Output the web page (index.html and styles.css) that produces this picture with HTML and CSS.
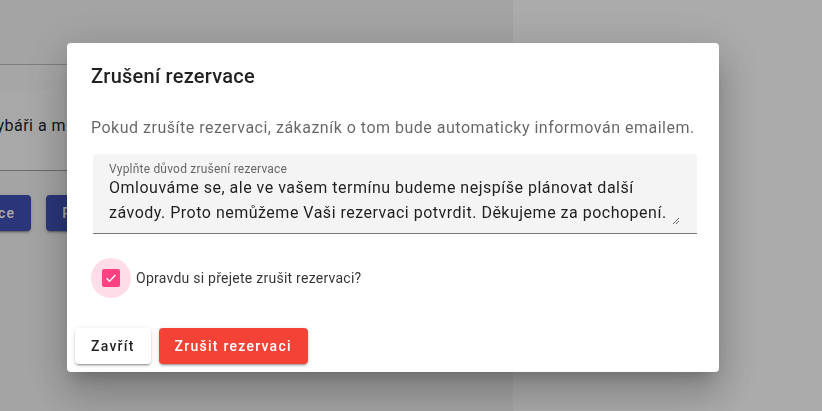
FILE: index.html
```html
<!DOCTYPE html>
<html lang="cs">
<head>
<meta charset="utf-8">
<title>Zrušení rezervace</title>
<link rel="stylesheet" href="styles.css">
</head>
<body>
<div class="page">
  <div class="left-panel">
    <div class="field field-top"></div>
    <div class="gap-band"></div>
    <div class="field field-fill">
      <div class="bg-label">Poznámka</div>
      <div class="bg-value">Zástupci rybáři a místní</div>
    </div>
    <div class="bg-actions">
      <button class="bg-btn bg-btn-first">Rezervace</button>
      <button class="bg-btn">Potvrdit</button>
    </div>
  </div>
  <div class="right-panel"></div>
</div>

<div class="backdrop">
  <div class="dialog">
    <h2 class="dialog-title">Zrušení rezervace</h2>
    <div class="dialog-content">
      <p class="info">Pokud zrušíte rezervaci, zákazník o tom bude automaticky informován emailem.</p>
      <div class="textfield">
        <label class="tf-label">Vyplňte důvod zrušení rezervace</label>
        <div class="tf-value">Omlouváme se, ale ve vašem termínu budeme nejspíše plánovat další závody. Proto nemůžeme Vaši rezervaci potvrdit. Děkujeme za pochopení.</div>
        <svg class="resize" width="8" height="8" viewBox="0 0 8 8"><path d="M7 1 L1 7 M7 4 L4 7" stroke="#555" stroke-width="0.9" fill="none"/></svg>
      </div>
      <div class="check-row">
        <span class="check-ripple">
          <span class="check-box">
            <svg width="14" height="14" viewBox="0 0 24 24"><path d="M4.5 12.5 L9.5 17.5 L19.5 7" stroke="#fff" stroke-width="2.6" fill="none"/></svg>
          </span>
        </span>
        <span class="check-label">Opravdu si přejete zrušit rezervaci?</span>
      </div>
    </div>
    <div class="dialog-actions">
      <button class="btn btn-white">Zavřít</button>
      <button class="btn btn-red">Zrušit rezervaci</button>
    </div>
  </div>
</div>
</body>
</html>
```

FILE: styles.css
```css
* { box-sizing: border-box; }
html, body { margin: 0; padding: 0; }
body {
  width: 822px;
  height: 411px;
  overflow: hidden;
  font-family: Roboto, "Noto Sans", sans-serif;
  background: #fff;
}
.page {
  display: flex;
  height: 411px;
}
.left-panel {
  width: 513px;
  background: #f5f5f5;
  display: flex;
  flex-direction: column;
  overflow: hidden;
}
.right-panel {
  flex: 1;
  background: #fff;
}
.field-top {
  height: 65px;
  border-bottom: 1px solid #bdbdbd;
}
.gap-band {
  height: 25px;
  background: #f8f8f8;
}
.field-fill {
  height: 81px;
  background: #fbfbfb;
  border-bottom: 1px solid #a0a0a0;
  padding: 6px 0 0 0;
  white-space: nowrap;
}
.bg-label {
  font-size: 12px;
  color: #a23fa0;
  margin-left: -60px;
  line-height: 16px;
}
.bg-value {
  font-size: 16px;
  color: #222;
  margin-left: -80px;
  margin-top: 4px;
  letter-spacing: 0.5px;
}
.bg-actions {
  display: flex;
  gap: 15px;
  margin-top: 24px;
  margin-left: -77px;
}
.bg-btn {
  height: 36px;
  padding: 0 16px;
  border: 0;
  border-radius: 4px;
  background: #3f51b5;
  color: #fff;
  font-family: Roboto, sans-serif;
  font-weight: 500;
  font-size: 14px;
  letter-spacing: 1.25px;
  white-space: nowrap;
  box-shadow: 0 3px 1px -2px rgba(0,0,0,.2), 0 2px 2px 0 rgba(0,0,0,.14), 0 1px 5px 0 rgba(0,0,0,.12);
}

.backdrop {
  position: fixed;
  inset: 0;
  background: rgba(0,0,0,0.33);
  display: flex;
  align-items: flex-start;
  padding: 43px 0 0 67px;
}
.dialog {
  width: 652px;
  height: 329px;
  background: #fff;
  border-radius: 4px;
  box-shadow: 0 11px 15px -7px rgba(0,0,0,.2), 0 24px 38px 3px rgba(0,0,0,.14), 0 9px 46px 8px rgba(0,0,0,.12);
  display: flex;
  flex-direction: column;
}
.dialog-title {
  margin: 0;
  padding: 21px 24px 0 24px;
  font-size: 20px;
  font-weight: 500;
  line-height: 24px;
  letter-spacing: 0.25px;
  color: rgba(0,0,0,.87);
}
.dialog-content {
  padding: 0 22px 0 24px;
}
.info {
  margin: 28px 0 0 0;
  font-size: 16px;
  line-height: 24px;
  letter-spacing: 0.5px;
  color: rgba(0,0,0,.6);
}
.textfield {
  margin: 14px 0 0 2px;
  height: 80px;
  background: #f4f4f4;
  border-radius: 4px 4px 0 0;
  border-bottom: 1px solid rgba(0,0,0,.5);
  padding: 7px 16px 0 16px;
  position: relative;
}
.tf-label {
  display: block;
  font-size: 12px;
  line-height: 16px;
  color: rgba(0,0,0,.6);
  letter-spacing: 0.2px;
}
.tf-value {
  font-size: 16px;
  line-height: 25px;
  letter-spacing: 0.5px;
  color: rgba(0,0,0,.87);
  margin-top: -2px;
  padding-right: 10px;
}
.resize {
  position: absolute;
  right: 17px;
  bottom: 8px;
}
.check-row {
  display: flex;
  align-items: center;
  margin-top: 24px;
  margin-left: 0;
}
.check-ripple {
  width: 40px;
  height: 40px;
  border-radius: 50%;
  background: #ffdde8;
  display: flex;
  align-items: center;
  justify-content: center;
}
.check-box {
  width: 18px;
  height: 18px;
  border-radius: 2px;
  background: #ff4081;
  display: flex;
  align-items: center;
  justify-content: center;
}
.check-label {
  margin-left: 5px;
  font-size: 14px;
  color: rgba(0,0,0,.8);
  letter-spacing: 0.25px;
}
.dialog-actions {
  margin-top: auto;
  padding: 0 8px 8px 8px;
  display: flex;
  gap: 8px;
}
.btn {
  height: 36px;
  padding: 0 16px;
  border: 0;
  border-radius: 4px;
  font-family: Roboto, sans-serif;
  font-size: 14px;
  font-weight: 500;
  letter-spacing: 1.25px;
  box-shadow: 0 3px 1px -2px rgba(0,0,0,.2), 0 2px 2px 0 rgba(0,0,0,.14), 0 1px 5px 0 rgba(0,0,0,.12);
}
.btn-white {
  background: #fff;
  color: rgba(0,0,0,.87);
}
.btn-red {
  background: #f44336;
  color: #fff;
}
```
